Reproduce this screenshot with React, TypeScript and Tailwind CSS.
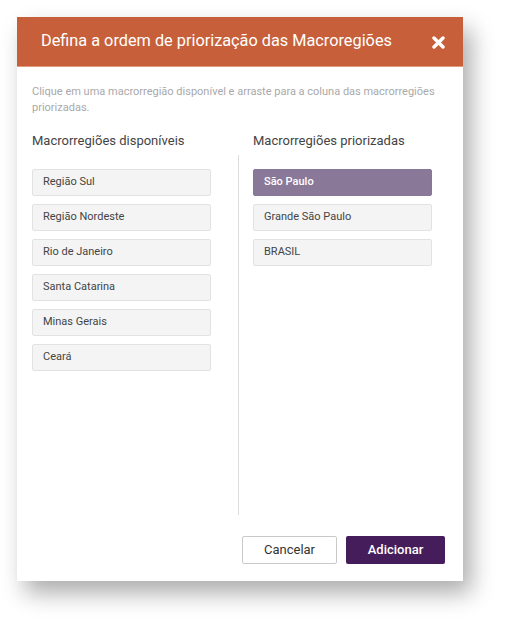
const available = ['Região Sul', 'Região Nordeste', 'Rio de Janeiro', 'Santa Catarina', 'Minas Gerais', 'Ceará'];
const prioritized = ['São Paulo', 'Grande São Paulo', 'BRASIL'];

function Item({ label, active }: { label: string; active?: boolean }) {
  return (
    <div
      className={
        active
          ? 'h-[27px] flex items-center pl-[10px] rounded-[2px] border border-[#86779a] bg-[#8a7899] text-white font-medium text-[11px]'
          : 'h-[27px] flex items-center pl-[10px] rounded-[2px] border border-[#e2e2e2] bg-[#f4f4f4] text-[#444] text-[11px]'
      }
    >
      {label}
    </div>
  );
}

export default function App() {
  return (
    <div className="min-h-screen bg-white p-[17px]" style={{ fontFamily: 'Roboto, "Liberation Sans", sans-serif' }}>
      <div className="w-[446px] h-[564px] bg-white flex flex-col shadow-[8px_12px_22px_rgba(0,0,0,0.33)]">
        <div className="h-[50px] bg-[#c7603a] border-b border-[#e29a7c] flex items-center justify-between pl-[24px] pr-[18px]">
          <h1 className="text-white text-[16.3px] leading-none">Defina a ordem de priorização das Macroregiões</h1>
          <svg width="13" height="13" viewBox="0 0 13 13" className="mt-[1px]">
            <path d="M2 2 L11 11 M11 2 L2 11" stroke="white" strokeWidth="3.4" strokeLinecap="round" />
          </svg>
        </div>

        <div className="flex-1 flex flex-col px-[15px] pt-[17px]">
          <p className="text-[11px] leading-[16px] text-[#a9a9a9] pr-[12px]">
            Clique em uma macrorregião disponível e arraste para a coluna das macrorregiões priorizadas.
          </p>

          <div className="flex mt-[15px] text-[13px] text-[#444]">
            <div className="w-[221px]">Macrorregiões disponíveis</div>
            <div>Macrorregiões priorizadas</div>
          </div>

          <div className="flex mt-[4px]">
            <div className="w-[179px] pt-[14px] flex flex-col gap-[8px]">
              {available.map((r) => (
                <Item key={r} label={r} />
              ))}
            </div>
            <div className="ml-[27px] w-px h-[360px] bg-[#dcdcdc]" />
            <div className="ml-[14px] w-[179px] pt-[14px] flex flex-col gap-[8px]">
              {prioritized.map((r, i) => (
                <Item key={r} label={r} active={i === 0} />
              ))}
            </div>
          </div>

          <div className="flex justify-end gap-[9px] mt-[21px] pr-[3px]">
            <button className="w-[95px] h-[28px] border border-[#c9c9c9] rounded-[2px] bg-white text-[13px] text-[#333]">
              Cancelar
            </button>
            <button className="w-[99px] h-[28px] rounded-[2px] bg-[#451d5a] text-white text-[13px] font-medium">
              Adicionar
            </button>
          </div>
        </div>
      </div>
    </div>
  );
}
